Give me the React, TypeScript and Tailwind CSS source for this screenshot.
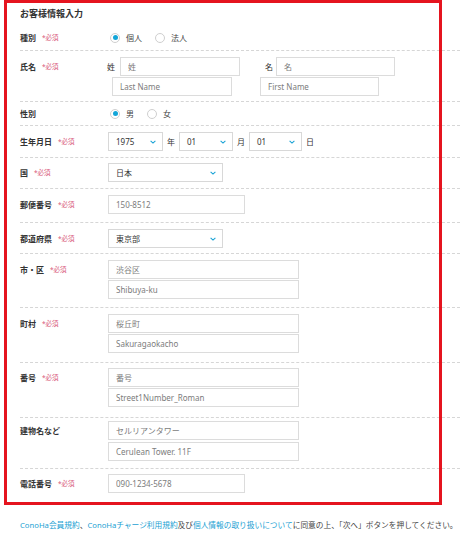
import React from "react";

const FONT = { fontFamily: '"Noto Sans", "Noto Sans CJK JP", sans-serif' };

function Required() {
  return <span className="ml-[6px] text-[6.5px] text-[#d8577a]">*必須</span>;
}

function Label({ text, required = true }: { text: string; required?: boolean }) {
  return (
    <div className="flex h-[19px] w-[88px] shrink-0 items-center">
      <span className="text-[8px] font-bold text-[#333]">{text}</span>
      {required && <Required />}
    </div>
  );
}

function TextBox({ placeholder, w = "w-[191px]" }: { placeholder: string; w?: string }) {
  return (
    <input
      readOnly
      placeholder={placeholder}
      className={`${w} block h-[19px] border border-[#dcdcdc] bg-white px-[7px] text-[8px] outline-none placeholder:text-[#7c7c7c]`}
    />
  );
}

function Chevron() {
  return (
    <svg width="6" height="4" viewBox="0 0 6 4" className="shrink-0">
      <path d="M0.6 0.8 L3 3.1 L5.4 0.8" fill="none" stroke="#1aa3d6" strokeWidth="1.1" />
    </svg>
  );
}

function Select({ value, w }: { value: string; w: string }) {
  return (
    <div className={`${w} flex h-[19px] items-center justify-between border border-[#d8d8d8] bg-white pl-[7px] pr-[6px]`}>
      <span className="text-[8px] text-[#333]">{value}</span>
      <Chevron />
    </div>
  );
}

function Radio({ checked, text }: { checked?: boolean; text: string }) {
  return (
    <div className="flex items-center">
      <span className="flex h-[10px] w-[10px] items-center justify-center rounded-full border border-[#cfcfcf] bg-white">
        {checked && <span className="h-[5px] w-[5px] rounded-full bg-[#12a5d8]" />}
      </span>
      <span className="ml-[6px] text-[8px] text-[#444]">{text}</span>
    </div>
  );
}

function Row({ className, children }: { className: string; children: React.ReactNode }) {
  return <div className={`ml-5 flex border-b border-dashed border-[#d6d6d6] ${className}`}>{children}</div>;
}

function Unit({ text }: { text: string }) {
  return <span className="mx-[4px] text-[8px] text-[#333]">{text}</span>;
}

export default function App() {
  return (
    <div className="relative h-[534px] w-[460px] overflow-hidden bg-white text-[8px] leading-[12px]" style={FONT}>
      <div className="pl-5 pt-[8px] text-[9px] font-bold leading-[12px] text-[#333]">お客様情報入力</div>

      <Row className="items-center pb-[3px] pt-[8px]">
        <Label text="種別" />
        <div className="flex gap-[13px] pl-[2px]">
          <Radio checked text="個人" />
          <Radio text="法人" />
        </div>
      </Row>

      <Row className="pb-[5px] pt-[6px]">
        <Label text="氏名" />
        <div className="flex">
          <div className="flex flex-col gap-[1px]">
            <div className="flex items-center">
              <span className="-ml-px w-[13px] text-[8px] text-[#333]">姓</span>
              <TextBox placeholder="姓" w="w-[120px]" />
            </div>
            <div className="ml-[4px]">
              <TextBox placeholder="Last Name" w="w-[120px]" />
            </div>
          </div>
          <div className="ml-[20px] flex flex-col gap-[1px]">
            <div className="flex items-center pl-[5px]">
              <span className="w-[11px] text-[8px] text-[#333]">名</span>
              <TextBox placeholder="名" w="w-[119px]" />
            </div>
            <TextBox placeholder="First Name" w="w-[119px]" />
          </div>
        </div>
      </Row>

      <Row className="items-center pb-[2px] pt-[2px]">
        <Label text="性別" required={false} />
        <div className="flex gap-[13px] pl-[2px]">
          <Radio checked text="男" />
          <Radio text="女" />
        </div>
      </Row>

      <Row className="pb-[6px] pt-[6px]">
        <Label text="生年月日" />
        <div className="flex items-center">
          <Select value="1975" w="w-[55px]" />
          <Unit text="年" />
          <Select value="01" w="w-[54px]" />
          <Unit text="月" />
          <Select value="01" w="w-[53px]" />
          <Unit text="日" />
        </div>
      </Row>

      <Row className="pb-[6px] pt-[5px]">
        <Label text="国" />
        <Select value="日本" w="w-[115px]" />
      </Row>

      <Row className="pb-[8px] pt-[6px]">
        <Label text="郵便番号" />
        <TextBox placeholder="150-8512" w="w-[137px]" />
      </Row>

      <Row className="pb-[5px] pt-[6px]">
        <Label text="都道府県" />
        <Select value="東京部" w="w-[115px]" />
      </Row>

      <Row className="pb-[8px] pt-[6px]">
        <Label text="市・区" />
        <div className="flex flex-col gap-[1px]">
          <TextBox placeholder="渋谷区" />
          <TextBox placeholder="Shibuya-ku" />
        </div>
      </Row>

      <Row className="pb-[9px] pt-[6px]">
        <Label text="町村" />
        <div className="flex flex-col gap-[1px]">
          <TextBox placeholder="桜丘町" />
          <TextBox placeholder="Sakuragaokacho" />
        </div>
      </Row>

      <Row className="pb-[10px] pt-[5px]">
        <Label text="番号" />
        <div className="flex flex-col gap-[1px]">
          <TextBox placeholder="番号" />
          <TextBox placeholder="Street1Number_Roman" />
        </div>
      </Row>

      <Row className="pb-[7px] pt-[3px]">
        <Label text="建物名など" required={false} />
        <div className="flex flex-col gap-[2px]">
          <TextBox placeholder="セルリアンタワー" />
          <TextBox placeholder="Cerulean Tower. 11F" />
        </div>
      </Row>

      <div className="ml-5 flex pt-[5px]">
        <Label text="電話番号" />
        <TextBox placeholder="090-1234-5678" w="w-[137px]" />
      </div>

      <p className="mt-[27px] whitespace-nowrap pl-5 text-[7.7px] leading-[10px] text-[#444]">
        <span className="text-[#1c9fd3]">ConoHa会員規約</span>、
        <span className="text-[#1c9fd3]">ConoHaチャージ利用規約</span>及び
        <span className="text-[#1c9fd3]">個人情報の取り扱いについて</span>
        に同意の上、「次へ」ボタンを押してください。
      </p>

      <div className="pointer-events-none absolute left-[4px] top-0 h-[505px] w-[438px] border-[3px] border-[#e5141f]" />
    </div>
  );
}
